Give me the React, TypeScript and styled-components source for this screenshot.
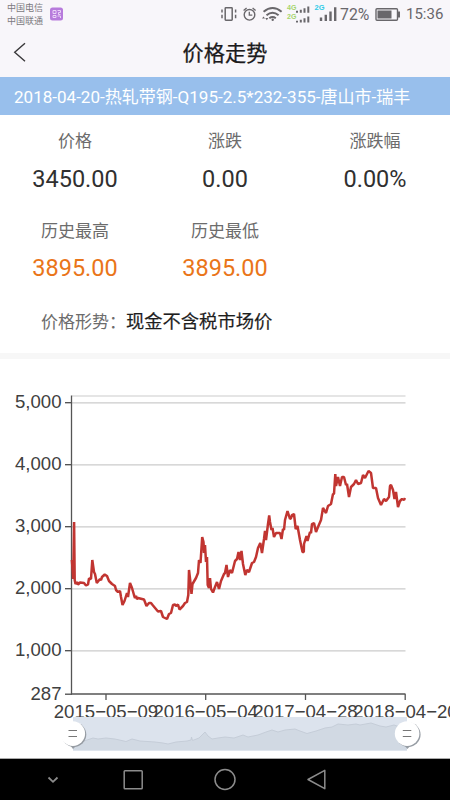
import React from "react";
import styled, { createGlobalStyle } from "styled-components";

const Global = createGlobalStyle`
  * { box-sizing: border-box; }
  body {
    margin: 0;
    background: #fff;
    font-family: Roboto, "Noto Sans CJK SC", sans-serif;
  }
`;

const Screen = styled.div`
  width: 450px;
  height: 800px;
  display: flex;
  flex-direction: column;
  overflow: hidden;
  background: #fff;
`;

const StatusBar = styled.div`
  height: 28px;
  flex: none;
  display: flex;
  align-items: center;
  justify-content: space-between;
  padding-left: 7px;
  background: #f8f6fa;
  color: #69676b;
`;

const Carriers = styled.div`
  display: flex;
  align-items: center;
  gap: 7px;
`;

const CarrierNames = styled.div`
  font-size: 9px;
  line-height: 13px;
  white-space: nowrap;
  padding-top: 2px;
  color: #7c7a7e;
`;

const StatusIcons = styled.div`
  display: flex;
  align-items: center;
  width: 229px;
  height: 28px;
`;

const StatusText = styled.span<{ $width: number; $size: number }>`
  width: ${(p) => p.$width}px;
  font-size: ${(p) => p.$size}px;
  line-height: 29px;
  white-space: nowrap;
`;

const BatterySlot = styled.div`
  width: 31px;
  height: 28px;
`;

const SignalIcons = styled.div`
  width: 119px;
  height: 28px;
  overflow: hidden;
  flex: none;
`;

const Header = styled.header`
  height: 49px;
  flex: none;
  display: grid;
  grid-template-columns: 40px 1fr 40px;
  align-items: center;
  background: #f8f6fa;
`;

const BackButton = styled.button`
  border: 0;
  padding: 0 0 2px 13px;
  height: 49px;
  background: none;
  display: flex;
  align-items: center;
`;

const Title = styled.h1`
  margin: 0;
  padding-top: 2px;
  text-align: center;
  font-size: 21.2px;
  line-height: 30px;
  font-weight: 400;
  color: #1c1b1d;
  -webkit-text-stroke: 0.25px #1c1b1d;
`;

const Banner = styled.div`
  height: 38px;
  flex: none;
  padding-left: 14px;
  background: #98bfec;
  color: #fff;
  font-size: 17.05px;
  line-height: 40px;
  white-space: nowrap;
`;

const Stats = styled.section`
  flex: none;
  height: 179px;
  display: grid;
  grid-template-columns: repeat(3, 150px);
  grid-template-rows: 89.5px 89.5px;
  padding-top: 13px;
`;

const Stat = styled.div`
  display: flex;
  flex-direction: column;
  align-items: center;
`;

const StatLabel = styled.span`
  font-size: 17px;
  line-height: 26px;
  color: #6c6c6c;
`;

const StatValue = styled.span<{ $accent?: boolean }>`
  margin-top: 9.5px;
  font-size: 23.5px;
  line-height: 30px;
  color: ${(p) => (p.$accent ? "#ea7519" : "#303030")};
`;

const Situation = styled.div`
  flex: none;
  height: 59px;
  display: flex;
  align-items: baseline;
  padding: 13.5px 0 0 41px;
  line-height: 28px;
  white-space: nowrap;
`;

const SituationLabel = styled.span`
  width: 85px;
  font-size: 17px;
  color: #6c6c6c;
`;

const SituationValue = styled.span`
  font-size: 18.3px;
  color: #1e1e1e;
  -webkit-text-stroke: 0.2px #1e1e1e;
`;

const Divider = styled.div`
  height: 6px;
  flex: none;
  background: #f7f7f7;
`;

const ChartArea = styled.section`
  flex: none;
  height: 400px;
  border-bottom: 1px solid #aaa;
`;

const ChartSvg = styled.svg`
  display: block;
  font-family: "Liberation Sans", Arial, sans-serif;
  font-size: 18.6px;
`;

const NavBar = styled.nav`
  flex: 1;
  background: #000;
`;

const TICKS: { label: string; y: number }[] = [
  { label: "5,000", y: 402.5 },
  { label: "4,000", y: 464.5 },
  { label: "3,000", y: 526.5 },
  { label: "2,000", y: 588.5 },
  { label: "1,000", y: 650.5 },
  { label: "287", y: 694 },
];

const DATES: { label: string; x: number }[] = [
  { label: "2015−05−09", x: 106 },
  { label: "2016−05−04", x: 205.7 },
  { label: "2017−04−28", x: 305.5 },
  { label: "2018−04−20", x: 405.5 },
];

const PRICE_LINE =
  "71.8,560 72.5,568 73.2,579 74.1,522 74.7,580 75.5,584 77,582 78,584.5 80,582.5 84,583 86,585.5 88,584.5 89,578.5 91,579 92.3,560 94,572 95,574 96.8,583 100,579 101,580 102,577 104.7,574.5 107,576 109,581 112,584 115,586 116,590 118,592 120,591 121,597 122.5,605 124.5,601 127,593 128,597 130,583 132,588 134,595 135,598 136,596 137,599 138,598 144,599.5 146.5,606 149,603 " +
  "151,603 153,605.5 158,611.5 161,611 163,617 167,619 169,614 171,613 173,605 175,604.5 176,606 178,604.5 179.5,609.5 183,606 185,603 187,602 188.3,595 189,570 190.2,580 191.5,594 192.5,584 196,578 198,573 199,560 200.5,563 202.2,537 203.5,542 204,553 205,545 206,562 207,557 207.7,585 209,588 210,578 211,589 213,592.5 215,587 217,582 219,589 221,581 224,574 225,573 226.5,565 228,577 230,570 232,573 235,561 237,559 238.5,552 240,560 241.5,551 243,564 245.3,575 247,570 249,572 252,563 254,562 256,557 258,548 260.3,543 262,553 264,539 265,531 266,540 268,524 269.2,515.5 270,522 271.5,530 272.5,528 274,537 276,533 280,533 281.5,539 283,529 284,530 285,520 287.5,511 290,519 " +
  "291,518 292,515 294,514 295.7,529 297.5,526 300,540 302.5,552 303.8,552 304,544 306.5,536 307.5,541 310,532 311,533 312,524 314,523 316,532 318,527 321,520 323,508 326,513 328,506 331,504 333,494 334,494 335.3,474 336,486 338,477 340,486 342,477 344,477 346,485 347,484 349,497 351,487 354,484 356,480 358,484 361,483 363,475 365,478 367,474 368.5,471 371,473 373,488 376,488 378,498 381,505 384,499 386,501 389,497 390,486 391,485 393,490 394.5,499 396,492 398,507 400,501 402,499 404,500 405,498";

const OVERVIEW =
  "73,741 80,742 84,741 93,738 98,739 106,738 115,739 126,741.5 132,739 140,741 155,742 163,743 168,744 176,742 187,741 191,740 191.5,737 192.5,740.5 199,738 205,732 208,736 212,739 218,738 225,737 234,738 243,735 248,737 258,735 266,732 272,730 278,732 285,730 295,729 300,731 307,733.5 316,731 325,728 332,727 338,724 348,725 356,724 360,725 371,723 380,726 386,727 394,725 400,727 406,727";

const HANDLES = [73, 407.3];

function SignalGlyphs() {
  return (
    <svg width="229" height="28" viewBox="221 0 229 28" fill="none" stroke="#69676b">
      <rect x="225.2" y="7.8" width="7" height="12.4" rx="0.6" strokeWidth="1.5" />
      <path d="M222 9.5v3M222 14.8v3.4M235.6 9.5v3M235.6 14.8v3.4" strokeWidth="1.5" />
      <circle cx="249.5" cy="14.8" r="5.3" strokeWidth="1.4" />
      <path d="M249.3 11.8v3.3h3M243.6 10.5l3-2.6M255.6 10.5l-3-2.6" strokeWidth="1.3" />
      <g strokeWidth="2">
        <path d="M263.6 11.7q9-7.5 18 0" />
        <path d="M266.5 15.2q6-5 12.1 0" />
        <path d="M269.3 18.2q3.3-2.5 6.5 0" />
      </g>
      <circle cx="272.7" cy="19.8" r="1.2" fill="#69676b" stroke="none" />
      <path d="M262 18.5l1.5-2 1.5 2zM265.3 18l1.5 2.3 1.5-2.3z" fill="#69676b" stroke="none" />
      <g fontFamily="Liberation Sans" fontSize="7" fontWeight="bold" stroke="none">
        <text x="287" y="9.5" fill="#a5d56c">4G</text>
        <text x="287" y="19.2" fill="#a5d56c">2G</text>
        <text x="314.5" y="9.5" fontSize="7.5" fill="#30cbe8">2G</text>
      </g>
      <g fill="#69676b" stroke="none">
        <path d="M296 10.8h2v2h-2zM299.8 9.8h2v3h-2zM303.5 8.3h2v4.5h-2zM307.3 6.5h2v6.3h-2z" />
        <path d="M296 20.8h2v1.8h-2zM299.8 19.8h2v2.8h-2zM303.5 18.3h2v4.3h-2zM307.3 16.5h2v6.1h-2z" />
        <path d="M319.8 17.5h2.4v3.6h-2.4zM324.6 14.7h2.4v6.4h-2.4zM329.3 11.4h2.4v9.7h-2.4zM334 7.3h2.4v13.8h-2.4z" />
      </g>
    </svg>
  );
}

export default function App() {
  return (
    <Screen>
      <Global />
      <StatusBar>
        <Carriers>
          <CarrierNames>
            中国电信
            <br />
            中国联通
          </CarrierNames>
          <svg width="13" height="14" viewBox="0 0 13 14">
            <rect x="0" y="0.5" width="13" height="13" rx="2.5" fill="#b77bdc" />
            <path
              d="M3 3.5h3v3H3zM3 8.5h3v2H3zM7.5 3.5h3v2h-2v2h2M7.5 9h3v2"
              fill="none"
              stroke="#ead3f7"
            />
          </svg>
        </Carriers>
        <StatusIcons>
          <SignalIcons>
            <SignalGlyphs />
          </SignalIcons>
          <StatusText $width={35} $size={15.8}>72%</StatusText>
          <BatterySlot>
            <svg width="31" height="28" viewBox="375 0 31 28">
              <rect x="376" y="8.8" width="21.5" height="11.4" rx="1" fill="none" stroke="#69676b" strokeWidth="1.4" />
              <path d="M377.5 10.5h14v8h-14zM398 11.5h2v6h-2z" fill="#69676b" />
            </svg>
          </BatterySlot>
          <StatusText $width={44} $size={15}>15:36</StatusText>
        </StatusIcons>
      </StatusBar>

      <Header>
        <BackButton aria-label="返回">
          <svg width="14" height="22" viewBox="0 0 14 22">
            <path d="M12 2.2L1.7 11.2L12 20.2" fill="none" stroke="#39383a" strokeWidth="1.4" />
          </svg>
        </BackButton>
        <Title>价格走势</Title>
      </Header>

      <Banner>2018-04-20-热轧带钢-Q195-2.5*232-355-唐山市-瑞丰</Banner>

      <Stats>
        <Stat>
          <StatLabel>价格</StatLabel>
          <StatValue>3450.00</StatValue>
        </Stat>
        <Stat>
          <StatLabel>涨跌</StatLabel>
          <StatValue>0.00</StatValue>
        </Stat>
        <Stat>
          <StatLabel>涨跌幅</StatLabel>
          <StatValue>0.00%</StatValue>
        </Stat>
        <Stat>
          <StatLabel>历史最高</StatLabel>
          <StatValue $accent>3895.00</StatValue>
        </Stat>
        <Stat>
          <StatLabel>历史最低</StatLabel>
          <StatValue $accent>3895.00</StatValue>
        </Stat>
      </Stats>

      <Situation>
        <SituationLabel>价格形势：</SituationLabel>
        <SituationValue>现金不含税市场价</SituationValue>
      </Situation>

      <Divider />

      <ChartArea>
        <ChartSvg width="450" height="399" viewBox="0 359 450 399">
          <path
            d="M72 396H405.5M72 402.8H405.5M72 464.8H405.5M72 526.8H405.5M72 588.8H405.5M72 650.8H405.5"
            stroke="#ccc"
            strokeWidth="1.2"
          />
          {TICKS.map((t) => (
            <g key={t.label}>
              <path d={`M65 ${t.y + 0.2}H72`} stroke="#4a4a4a" strokeWidth="1.3" />
              <text x="61.5" y={t.y + 5.5} textAnchor="end" fill="#404040">
                {t.label}
              </text>
            </g>
          ))}
          <path d="M71.5 395.5V694" stroke="#555" strokeWidth="1.3" />
          <path d="M71 694H405.5M106 694v6M205.7 694v6M305.5 694v6M405.2 694v6" fill="none" stroke="#555" strokeWidth="1.3" />
          <polyline points={PRICE_LINE} fill="none" stroke="#c13531" strokeWidth="2.5" strokeLinejoin="bevel" />
          {DATES.map((d) => (
            <text key={d.label} x={d.x} y="717.8" textAnchor="middle" fill="#404040">
              {d.label}
            </text>
          ))}
          <rect x="73" y="717" width="334" height="33.5" fill="#dce3ed" />
          <polygon points={`73,750.5 ${OVERVIEW} 407,750.5`} fill="#d1d9e3" />
          <polyline points={OVERVIEW} fill="none" stroke="#c3cbd6" strokeWidth="0.9" />
          {HANDLES.map((x) => (
            <g key={x}>
              <circle cx={x + 1} cy="734.6" r="12.3" fill="#969ca3" />
              <path d={`M${x - 3} 745L${x} 749L${x + 4} 745z`} fill="#969ca3" />
              <circle cx={x - 0.2} cy="733.6" r="12.3" fill="#fff" />
              <path d={`M${x - 4.5} 730.5h8.5M${x - 4.5} 736.5h8.5`} stroke="#777" strokeWidth="1.2" />
            </g>
          ))}
        </ChartSvg>
      </ChartArea>

      <NavBar>
        <svg width="450" height="41" viewBox="0 759 450 41" fill="none" stroke="#8c8c8c" strokeWidth="1.5">
          <path d="M48.5 777.5l4.5 4.3 4.5-4.3" strokeWidth="1.8" />
          <rect x="124.2" y="770.7" width="18" height="18" rx="0.8" />
          <circle cx="225" cy="779.5" r="10" />
          <path d="M324.8 770.3v18.4l-16.8-9.2z" strokeLinejoin="round" />
        </svg>
      </NavBar>
    </Screen>
  );
}
